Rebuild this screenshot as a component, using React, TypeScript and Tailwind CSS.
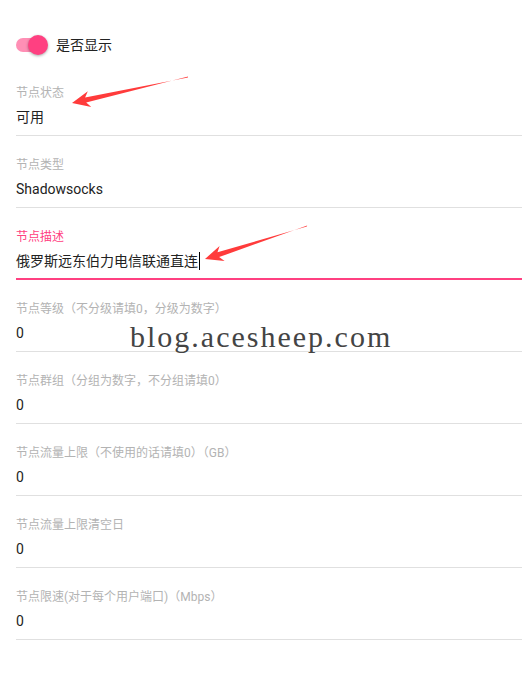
import React from "react";

type Field = { label: string; value: string; focused?: boolean };

const fields: Field[] = [
  { label: "节点状态", value: "可用" },
  { label: "节点类型", value: "Shadowsocks" },
  { label: "节点描述", value: "俄罗斯远东伯力电信联通直连", focused: true },
  { label: "节点等级（不分级请填0，分级为数字）", value: "0" },
  { label: "节点群组（分组为数字，不分组请填0）", value: "0" },
  { label: "节点流量上限（不使用的话请填0）（GB）", value: "0" },
  { label: "节点流量上限清空日", value: "0" },
  { label: "节点限速(对于每个用户端口)（Mbps）", value: "0" },
];

function FieldRow({ f }: { f: Field }) {
  return (
    <div
      className={
        f.focused
          ? "pt-[21px] pb-[7px] border-b-2 border-[#ff4081]"
          : "pt-[21px] pb-[8px] border-b border-[#e0e0e0]"
      }
    >
      <div
        className={
          f.focused
            ? "text-[12px] leading-4 text-[#ff4081]"
            : "text-[12px] leading-4 text-[#b3b3b3]"
        }
      >
        {f.label}
      </div>
      <div className="mt-[6px] flex items-center text-[14px] leading-5 text-[#222]">
        <span>{f.value}</span>
        {f.focused && <span className="ml-px inline-block h-[18px] w-px bg-black" />}
      </div>
    </div>
  );
}

export default function App() {
  return (
    <div
      className="relative min-h-[676px] w-full bg-white pl-4 pt-[33px]"
      style={{ fontFamily: 'Roboto, "Noto Sans CJK SC", sans-serif' }}
    >
      <div className="flex h-6 items-center">
        <div className="relative h-6 w-[34px]">
          <div className="absolute left-0 top-[5px] h-[14px] w-[30px] rounded-full bg-[#ff8fb5]" />
          <div className="absolute left-[12px] top-[2px] h-5 w-5 rounded-full bg-[#ff4081] shadow-[0_1px_3px_rgba(0,0,0,0.35)]" />
        </div>
        <span className="ml-[6px] text-[14px] text-[#222]">是否显示</span>
      </div>
      <div className="mt-[7px] flex flex-col">
        {fields.map((f) => (
          <FieldRow key={f.label} f={f} />
        ))}
      </div>

      <div
        className="pointer-events-none absolute left-[130px] top-[319px] text-[30px] leading-9 tracking-[2px] text-[#444]"
        style={{ fontFamily: '"Liberation Serif", serif' }}
      >
        blog.acesheep.com
      </div>

      <svg
        className="pointer-events-none absolute left-0 top-0"
        width="522"
        height="676"
        viewBox="0 0 522 676"
      >
        <polygon
          fill="#ff3b3b"
          points="188.1,76.5 86.2,102.4 91.3,106.9 72,103 87.8,91.3 85.1,97.5 187.9,77.5"
        />
        <polygon
          fill="#ff3b3b"
          points="307.2,225.5 219.1,257.1 224.6,261.1 205,259 219.6,245.9 217.5,252.3 306.8,226.5"
        />
      </svg>
    </div>
  );
}
